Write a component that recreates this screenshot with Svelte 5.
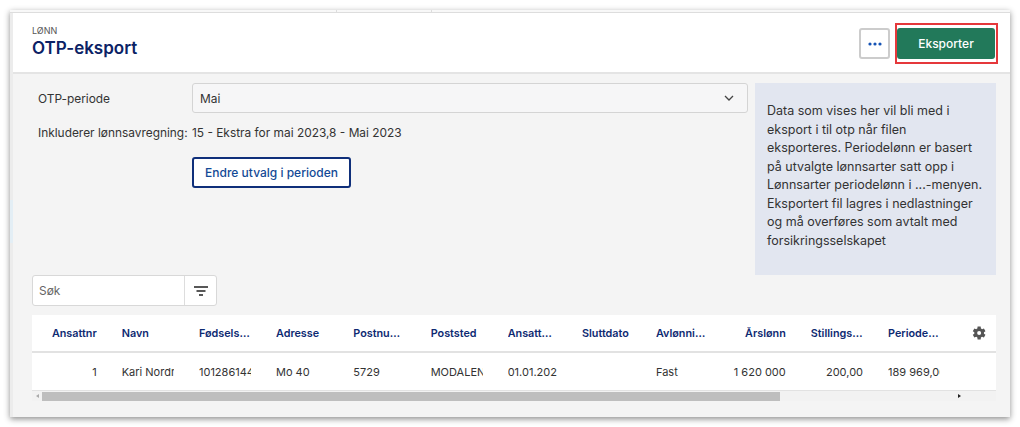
<script>
  const columns = [
    { title: 'Ansattnr', value: '1', align: 'right', width: 77.2 },
    { title: 'Navn', value: 'Kari Nordmann', width: 77.3 },
    { title: 'Fødselsnummer', value: '10128614444', width: 77 },
    { title: 'Adresse', value: 'Mo 40', width: 77.3 },
    { title: 'Postnummer', value: '5729', width: 77.4 },
    { title: 'Poststed', value: 'MODALEN', width: 77 },
    { title: 'Ansattelsesdato', value: '01.01.2023', width: 74.3 },
    { title: 'Sluttdato', value: '', width: 74 },
    { title: 'Avlønningsform', value: 'Fast', width: 77.4 },
    { title: 'Årslønn', value: '1 620 000', align: 'right', width: 77.4 },
    { title: 'Stillingsprosent', value: '200,00', align: 'right', headLeft: true, width: 77.3 },
    { title: 'Periodelønn', value: '189 969,00', align: 'right', headLeft: true, width: 77.3 }
  ];

  const gridColumns = columns.map((c) => c.width + 'px').join(' ') + ' 1fr';

  const infoLines = [
    'Data som vises her vil bli med i',
    'eksport i til otp når filen',
    'eksporteres. Periodelønn er basert',
    'på utvalgte lønnsarter satt opp i',
    'Lønnsarter periodelønn i ...-menyen.',
    'Eksportert fil lagres i nedlastninger',
    'og må overføres som avtalt med',
    'forsikringsselskapet'
  ];
</script>

<div class="page">
  <div class="window">
    <div class="top-strip">
      <span class="tab-line first"></span>
      <span class="tab-line second"></span>
    </div>
    <div class="main">
      <div class="side-strip"><span class="side-mark"></span></div>
      <div class="content">
        <header class="header">
          <div class="heading">
            <div class="crumb">LØNN</div>
            <h1>OTP-eksport</h1>
          </div>
          <div class="actions">
            <button class="more" aria-label="Mer">
              <svg width="14" height="4" viewBox="0 0 14 4"><circle cx="2" cy="2" r="1.6" /><circle cx="7" cy="2" r="1.6" /><circle cx="12" cy="2" r="1.6" /></svg>
            </button>
            <span class="highlight"><button class="export">Eksporter</button></span>
          </div>
        </header>

        <section class="body">
          <div class="top">
            <div class="form">
              <div class="row">
                <span class="label">OTP-periode</span>
                <div class="select">
                  <span>Mai</span>
                  <svg width="10" height="6" viewBox="0 0 10 6"><path d="M1 1l4 4 4-4" fill="none" stroke="#444" stroke-width="1.3" /></svg>
                </div>
              </div>
              <div class="row included">
                <span class="label">Inkluderer lønnsavregning:</span>
                <span>15 - Ekstra for mai 2023,8 - Mai 2023</span>
              </div>
              <div class="row change">
                <span class="label"></span>
                <button class="outline">Endre utvalg i perioden</button>
              </div>
            </div>
            <aside class="info">
              {#each infoLines as line}
                <div>{line}</div>
              {/each}
            </aside>
          </div>

          <div class="search">
            <span class="search-text">Søk</span>
            <span class="filter">
              <svg width="14" height="10" viewBox="0 0 14 10"><path d="M0 1h14M2.5 5h9M5 9h4" stroke="#222" stroke-width="1.4" fill="none" /></svg>
            </span>
          </div>

          <div class="table">
            <div class="tr head" style="grid-template-columns: {gridColumns}">
              {#each columns as col}
                <div class="th" class:right={col.align === 'right' && !col.headLeft}><span>{col.title}</span></div>
              {/each}
              <div class="gear">
                <svg width="16" height="16" viewBox="0 0 24 24"><path fill="#555" fill-rule="evenodd" d="M19.4 13a7.6 7.6 0 0 0 0-2l2.3-1.8-2.3-4-2.8 1.1a7.6 7.6 0 0 0-1.700-1L14.500 2.300h-4.600l-.4 3a7.600 7.600 0 0 0-1.700 1L5 5.200l-2.300 4L5 11a7.600 7.600 0 0 0 0 2l-2.300 1.800 2.300 4 2.800-1.100c.5.400 1.100.700 1.700 1l.4 3h4.600l.4-3c.6-.3 1.200-.6 1.700-1l2.800 1.100 2.300-4zM12.200 15a3 3 0 1 1 0-6 3 3 0 0 1 0 6z" /></svg>
              </div>
            </div>
            <div class="tr" style="grid-template-columns: {gridColumns}">
              {#each columns as col}
                <div class="td" class:right={col.align === 'right'}><span>{col.value}</span></div>
              {/each}
              <div></div>
            </div>
          </div>

          <div class="scrollbar">
            <span class="arrow left"></span>
            <span class="track"><span class="thumb"></span></span>
            <span class="arrow right"></span>
          </div>
        </section>
      </div>
    </div>
  </div>
</div>

<style>
  :global(body) {
    margin: 0;
    background: #fff;
  }

  .page {
    width: 1020px;
    height: 427px;
    padding: 10px;
    box-sizing: border-box;
    overflow: hidden;
    font-family: Inter, "Open Sans", sans-serif;
    font-size: 11.9px;
    color: #333;
  }

  .window {
    height: 407px;
    display: flex;
    flex-direction: column;
    box-shadow: 0 2px 6px rgba(0, 0, 0, 0.45);
    background: #f4f4f4;
  }

  .top-strip {
    height: 3px;
    box-sizing: border-box;
    flex: none;
    background: #f8f8f8;
    position: relative;
    border-bottom: 1px solid #ddd;
  }

  .tab-line {
    position: absolute;
    top: 0;
    width: 1px;
    height: 3px;
    background: #ddd;
  }

  .tab-line.first { left: 326px; }
  .tab-line.second { left: 421px; }

  .main {
    flex: 1;
    display: flex;
    min-height: 0;
  }

  .side-strip {
    width: 3px;
    flex: none;
    background: #ececec;
    padding-top: 187px;
    box-sizing: border-box;
  }

  .side-mark {
    display: block;
    height: 43px;
    background: #e3eef5;
  }

  .content {
    flex: 1;
    min-width: 0;
  }

  .header {
    height: 59px;
    background: #fff;
    border-bottom: 2px solid #e4e4e4;
    display: flex;
    justify-content: space-between;
    padding: 0 12px 0 19px;
  }

  .heading {
    padding-top: 12px;
  }

  .crumb {
    font-size: 9px;
    line-height: 11px;
    color: #555;
  }

  h1 {
    margin: 2px 0 0;
    font-size: 17px;
    line-height: 20px;
    font-weight: 600;
    color: #0b2265;
  }

  .actions {
    display: flex;
    align-items: flex-start;
    gap: 5px;
    padding-top: 10px;
  }

  button {
    font-family: inherit;
    cursor: pointer;
  }

  .more {
    width: 31px;
    height: 31px;
    margin-top: 5px;
    padding: 0;
    background: #fff;
    border: 2px solid #ccc;
    border-radius: 3px;
    display: flex;
    align-items: center;
    justify-content: center;
  }

  .more circle {
    fill: #1553b5;
  }

  .highlight {
    display: block;
    border: 2px solid #e5383b;
    padding: 3px 1px 3px 0;
  }

  .export {
    display: block;
    width: 98px;
    height: 31px;
    background: #22795a;
    color: #fff;
    border: none;
    border-radius: 3px;
    font-size: 12px;
    font-weight: 500;
    padding: 0;
  }

  .body {
    padding: 9px 14px 0 19px;
  }

  .top {
    display: flex;
    gap: 7px;
    height: 192px;
  }

  .form {
    width: 716px;
    flex: none;
  }

  .row {
    display: flex;
    align-items: center;
  }

  .label {
    width: 160px;
    flex: none;
    padding-left: 6px;
    box-sizing: border-box;
    white-space: nowrap;
  }

  .select {
    flex: 1;
    height: 30px;
    box-sizing: border-box;
    border: 1px solid #d4d4d4;
    border-radius: 3px;
    background: #f6f6f7;
    padding: 0 13px 0 7px;
    display: flex;
    align-items: center;
    justify-content: space-between;
  }

  .included {
    margin-top: 12px;
    height: 15px;
    line-height: 15px;
  }

  .change {
    margin-top: 17px;
  }

  .outline {
    width: 159px;
    height: 31px;
    padding: 0;
    background: #fff;
    border: 2px solid #0f2f7a;
    border-radius: 3px;
    color: #134a96;
    font-size: 12px;
    font-weight: 500;
  }

  .info {
    width: 241px;
    flex: none;
    box-sizing: border-box;
    background: #e2e6f0;
    padding: 19px 12px 0;
    line-height: 18.5px;
    font-size: 12.5px;
    white-space: nowrap;
  }

  .search {
    width: 185px;
    height: 31px;
    box-sizing: border-box;
    border: 1px solid #d8d8d8;
    border-radius: 3px;
    background: #fff;
    display: flex;
    align-items: center;
    justify-content: space-between;
  }

  .search-text {
    padding-left: 6px;
    color: #666;
  }

  .filter {
    width: 31px;
    height: 100%;
    border-left: 1px solid #ddd;
    display: flex;
    align-items: center;
    justify-content: center;
  }

  .table {
    margin-top: 9px;
    background: #fff;
  }

  .tr {
    display: grid;
    height: 38px;
    align-items: center;
    border-bottom: 1px solid #e2e2e2;
    box-sizing: border-box;
  }

  .head {
    border-bottom-width: 2px;
  }

  .th,
  .td {
    padding: 0 12.5px;
    white-space: nowrap;
    font-size: 11px;
  }

  .th span,
  .td span {
    display: block;
    overflow: hidden;
  }

  .th span {
    text-overflow: ellipsis;
  }

  .th {
    font-size: 10.8px;
    font-weight: 600;
    color: #0e2a72;
  }

  .right {
    text-align: right;
  }

  .gear {
    display: flex;
    justify-content: flex-end;
    padding-right: 9px;
  }

  .scrollbar {
    height: 10px;
    display: flex;
    background: #f2f2f2;
    align-items: center;
    padding-right: 32px;
  }

  .arrow {
    width: 10px;
    flex: none;
    display: flex;
    justify-content: center;
  }

  .arrow::before {
    content: '';
    border: 2px solid transparent;
  }

  .arrow.left::before {
    border-right: 3px solid #aaa;
    border-left: 0;
  }

  .arrow.right::before {
    border-left: 3px solid #222;
    border-right: 0;
  }

  .track {
    flex: 1;
    padding-right: 174px;
  }

  .thumb {
    display: block;
    height: 9px;
    background: #bebebe;
  }
</style>
